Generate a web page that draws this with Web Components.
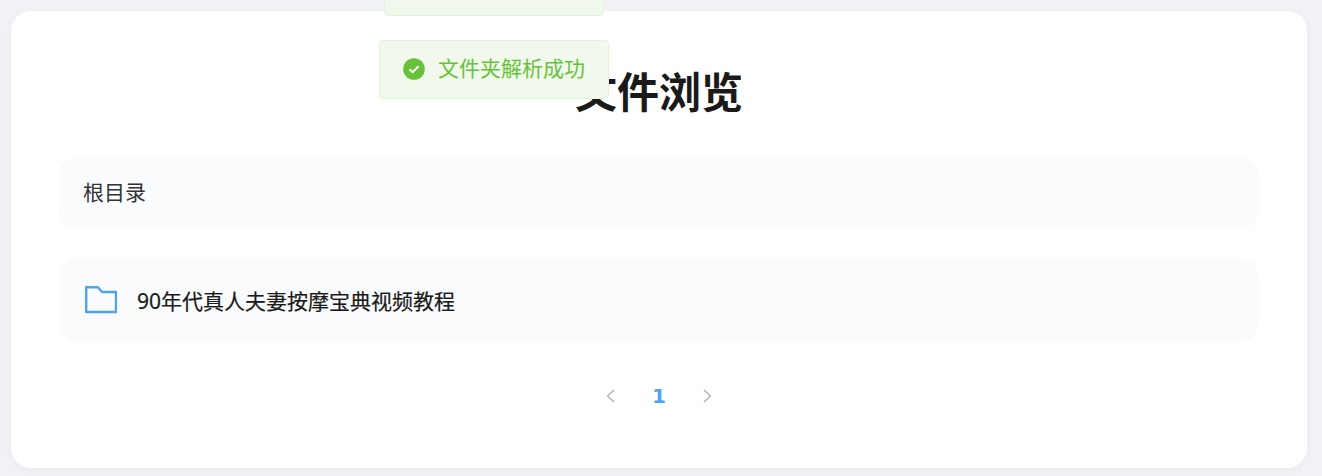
<!DOCTYPE html>
<html lang="zh">
<head>
<meta charset="utf-8">
<title>文件浏览</title>
<style>
  html, body { margin: 0; height: 100%; }
  body {
    background: #f0f2f5; overflow: hidden;
    font-family: "Noto Sans", "Noto Sans CJK SC", sans-serif;
  }
</style>
</head>
<body>
<file-browser>
  <page-title>文件浏览</page-title>
  <path-bar>根目录</path-bar>
  <folder-row>90年代真人夫妻按摩宝典视频教程</folder-row>
  <page-nav current="1"></page-nav>
</file-browser>
<toast-message style="top:-43px; left:384px; width:220px"></toast-message>
<toast-message style="top:40px; left:379px; width:230px">文件夹解析成功</toast-message>

<script>
// 外层卡片
class FileBrowser extends HTMLElement {
  constructor() {
    super();
    this.attachShadow({ mode: 'open' }).innerHTML = `
      <style>
        :host { display: block; padding: 11px 15px 8px 11px; }
        .card {
          background: #fff; border-radius: 20px; height: 457px;
          box-sizing: border-box; padding: 57px 48px 0;
          box-shadow: 0 2px 12px rgba(0, 0, 0, 0.03);
          display: flex; flex-direction: column;
        }
      </style>
      <div class="card"><slot></slot></div>
    `;
  }
}

class PageTitle extends HTMLElement {
  constructor() {
    super();
    this.attachShadow({ mode: 'open' }).innerHTML = `
      <style>
        :host {
          display: block; text-align: center; color: #1a1a1a;
          font-size: 42px; font-weight: 700; line-height: 48px;
          margin-bottom: 42px;
        }
      </style>
      <slot></slot>
    `;
  }
}

class PathBar extends HTMLElement {
  constructor() {
    super();
    this.attachShadow({ mode: 'open' }).innerHTML = `
      <style>
        :host {
          display: flex; align-items: center; height: 70px;
          box-sizing: border-box; padding: 0 24px 4px;
          background: #fafbfd; border-radius: 16px;
          color: #333; font-size: 21px; margin-bottom: 30px;
        }
      </style>
      <slot></slot>
    `;
  }
}

class FolderRow extends HTMLElement {
  constructor() {
    super();
    this.attachShadow({ mode: 'open' }).innerHTML = `
      <style>
        :host {
          display: flex; align-items: center; height: 84px; gap: 20px;
          padding: 0 24px 0 26px; background: #fafbfd; border-radius: 20px;
          color: #1a1a1a; font-size: 21px;
          -webkit-text-stroke: 0.2px #1a1a1a;
        }
        svg { display: block; flex: none; }
      </style>
      <svg width="32" height="28" viewBox="0 0 32 28" fill="none" stroke="#4fa3f3" stroke-width="2.4" stroke-linejoin="round">
        <path d="M1.2 1.2H13L17 6H31V26H1.2Z"/>
      </svg>
      <slot></slot>
    `;
  }
}

class PageNav extends HTMLElement {
  constructor() {
    super();
    const current = this.getAttribute('current') || '1';
    this.attachShadow({ mode: 'open' }).innerHTML = `
      <style>
        :host {
          display: flex; justify-content: center; align-items: center;
          gap: 31.5px; margin-top: 36px; height: 36px;
          color: #4fa3f3; font-size: 20px; font-weight: 700;
          font-family: "DejaVu Sans", sans-serif;
        }
        svg { display: block; }
        span { width: 18px; text-align: center; }
      </style>
      <svg width="16" height="16" viewBox="0 0 16 16" fill="none" stroke="#a8abb2" stroke-width="1.2"><path d="M11 2L4.5 8L11 14"/></svg>
      <span>${current}</span>
      <svg width="16" height="16" viewBox="0 0 16 16" fill="none" stroke="#a8abb2" stroke-width="1.2"><path d="M4 2L10.5 8L4 14"/></svg>
    `;
  }
}

// 顶部提示
class ToastMessage extends HTMLElement {
  constructor() {
    super();
    this.attachShadow({ mode: 'open' }).innerHTML = `
      <style>
        :host {
          position: fixed; display: flex; align-items: center; gap: 13px;
          box-sizing: border-box; height: 59px; padding: 0 23px;
          background: #f0f9eb; border: 1px solid #e1f3d8; border-radius: 4px;
          color: #67c23a; font-size: 21px;
        }
        svg { display: block; flex: none; margin-bottom: 1px; }
        .text { margin-bottom: 6px; }
      </style>
      <svg width="22" height="22" viewBox="0 0 22 22">
        <circle cx="11" cy="11" r="10.8" fill="#67c23a"/>
        <path d="M6.5 11.2L9.7 14.2L15.5 8.2" fill="none" stroke="#fff" stroke-width="2"/>
      </svg>
      <span class="text"><slot></slot></span>
    `;
  }
}

customElements.define('file-browser', FileBrowser);
customElements.define('page-title', PageTitle);
customElements.define('path-bar', PathBar);
customElements.define('folder-row', FolderRow);
customElements.define('page-nav', PageNav);
customElements.define('toast-message', ToastMessage);
</script>
</body>
</html>
